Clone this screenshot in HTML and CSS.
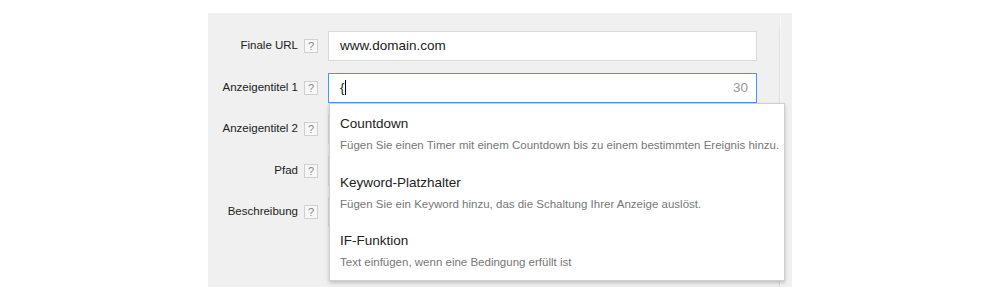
FILE: index.html
```html
<!DOCTYPE html>
<html lang="de">
<head>
    <meta charset="UTF-8">
    <title>Anzeige bearbeiten</title>
    <link rel="stylesheet" href="styles.css">
</head>
<body>
    <div class="panel">
        <div class="divider"></div>
        <div class="form">
            <div class="row">
                <label class="label">Finale URL</label>
                <span class="help">?</span>
                <div class="field">www.domain.com</div>
            </div>
            <div class="row">
                <label class="label">Anzeigentitel 1</label>
                <span class="help">?</span>
                <div class="field focused">{<span class="caret"></span><span class="count">30</span></div>
            </div>
            <div class="row">
                <label class="label">Anzeigentitel 2</label>
                <span class="help">?</span>
                <div class="field"></div>
            </div>
            <div class="row">
                <label class="label">Pfad</label>
                <span class="help">?</span>
                <div class="field"></div>
            </div>
            <div class="row">
                <label class="label">Beschreibung</label>
                <span class="help">?</span>
                <div class="field"></div>
            </div>
        </div>

        <ul class="suggest">
            <li class="suggest-item">
                <div class="suggest-title">Countdown</div>
                <div class="suggest-desc">Fügen Sie einen Timer mit einem Countdown bis zu einem bestimmten Ereignis hinzu.</div>
            </li>
            <li class="suggest-item">
                <div class="suggest-title">Keyword-Platzhalter</div>
                <div class="suggest-desc">Fügen Sie ein Keyword hinzu, das die Schaltung Ihrer Anzeige auslöst.</div>
            </li>
            <li class="suggest-item">
                <div class="suggest-title">IF-Funktion</div>
                <div class="suggest-desc">Text einfügen, wenn eine Bedingung erfüllt ist</div>
            </li>
        </ul>
    </div>
</body>
</html>
```

FILE: styles.css
```css
body {
    margin: 0;
    background: #fff;
    font-family: 'Liberation Sans', Arial, sans-serif;
    color: #222;
}
.panel {
    position: relative;
    margin: 13px 0 0 208px;
    width: 584px;
    height: 274px;
    background: #f0f0f0;
}
.divider {
    position: absolute;
    left: 571px;
    top: 4px;
    bottom: 0;
    width: 1px;
    background: linear-gradient(to bottom, rgba(220, 220, 220, 0) 0%, #dcdcdc 8%, #dcdcdc 100%);
    box-shadow: 1px 0 0 #f8f8f8;
}
.form {
    padding-top: 18px;
    display: flex;
    flex-direction: column;
    gap: 11.5px;
}
.row {
    display: flex;
    align-items: center;
    height: 30px;
}
.label {
    width: 90px;
    text-align: right;
    font-size: 11.5px;
    color: #222;
    margin-right: 6px;
    margin-top: -2px;
}
.help {
    width: 12px;
    height: 12px;
    border: 1px solid #d0d0d0;
    background: #f7f7f7;
    color: #8a8a8a;
    font-size: 11px;
    line-height: 12px;
    text-align: center;
    margin-right: 10px;
}
.field {
    position: relative;
    box-sizing: border-box;
    width: 429px;
    height: 30px;
    padding: 0 11px;
    background: #fff;
    border: 1px solid #d9d9d9;
    font-size: 13.5px;
    line-height: 28px;
    color: #222;
}
.field.focused {
    border-color: #4d90fe;
}
.caret {
    display: inline-block;
    width: 1px;
    height: 15px;
    background: #000;
    vertical-align: -3px;
}
.count {
    position: absolute;
    right: 8px;
    top: 0;
    color: #999;
}
.suggest {
    position: absolute;
    left: 121px;
    top: 90px;
    width: 456px;
    height: 178px;
    box-sizing: border-box;
    margin: 0;
    padding: 0;
    list-style: none;
    background: #fff;
    border: 1px solid #cfcfcf;
    box-shadow: 0 2px 4px rgba(0, 0, 0, 0.2);
}
.suggest-item {
    padding: 11px 0 9.5px 10px;
}
.suggest-title {
    font-size: 13.5px;
    line-height: 18px;
    color: #222;
}
.suggest-desc {
    margin-top: 4px;
    font-size: 11.5px;
    line-height: 16px;
    color: #777;
}
```
